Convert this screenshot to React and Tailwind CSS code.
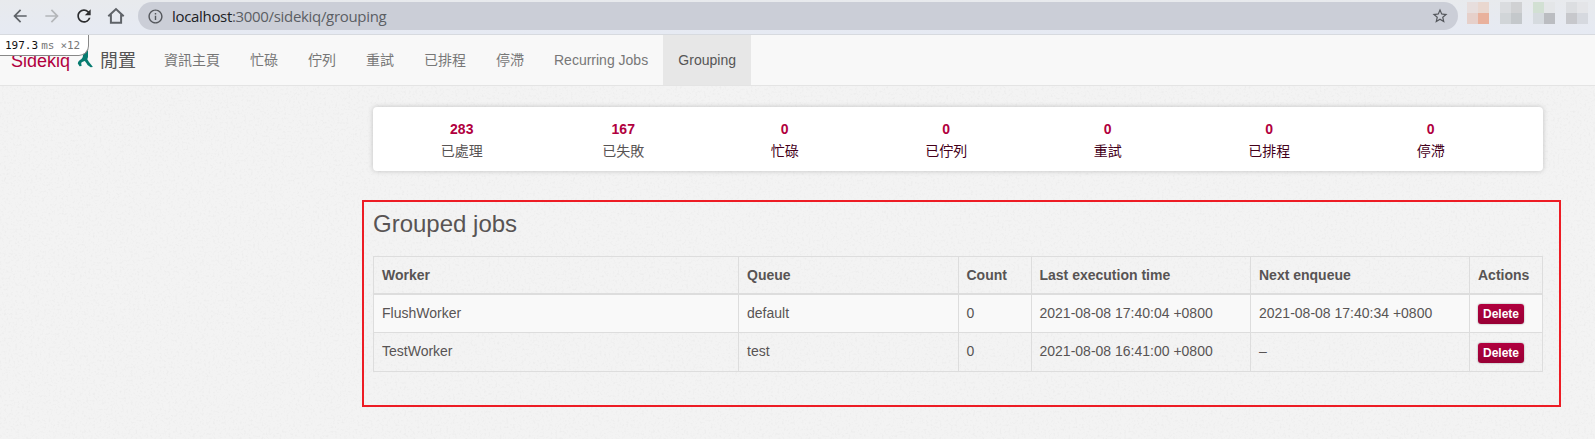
import React from "react";
import { MdArrowBack, MdArrowForward, MdRefresh, MdInfoOutline, MdStarBorder } from "react-icons/md";

const stats = [
  ["283", "已處理", false],
  ["167", "已失敗", false],
  ["0", "忙碌", true],
  ["0", "已佇列", true],
  ["0", "重試", true],
  ["0", "已排程", true],
  ["0", "停滯", true],
];

const rows = [
  ["FlushWorker", "default", "0", "2021-08-08 17:40:04 +0800", "2021-08-08 17:40:34 +0800"],
  ["TestWorker", "test", "0", "2021-08-08 16:41:00 +0800", "–"],
];

function Toolbar() {
  return (
    <header className="flex h-[35px] items-start border-b border-[#d7dadf] bg-gradient-to-b from-[#e8eaed] to-[#e6eaf3] font-['Open_Sans','Noto_Sans_CJK_TC',sans-serif]">
      <div className="flex h-8 w-[138px] shrink-0 items-center pl-[10px] text-[#5f6368]">
        <MdArrowBack className="size-5" />
        <MdArrowForward className="ml-3 size-5 text-[#b4b6b9]" />
        <MdRefresh className="ml-3 size-5 text-[#2c2d2f]" />
        <svg className="ml-3 size-5" viewBox="0 0 20 20" fill="none" stroke="currentColor" strokeWidth="2">
          <path d="M2.3 10.2 10 3l7.700 7.200M4.900 8.500v8.300h10.200V8.500" />
        </svg>
      </div>
      <div className="mt-[2px] flex h-7 w-[1320px] shrink-0 items-center rounded-full bg-[#cbced7] pl-[9px] pr-[9px]">
        <MdInfoOutline className="size-[17px] text-[#54575c]" />
        <span className="ml-2 whitespace-nowrap text-[15px] leading-7 tracking-[-0.320px] text-[#5b5e64]">
          <span className="text-[#202124]">localhost</span>:3000/sidekiq/grouping
        </span>
        <MdStarBorder className="ml-auto size-[18px] text-[#54575c]" />
      </div>
      <div className="ml-[9px] mt-[2px] flex gap-[11px]">
        <Mosaic a="bg-[#e7dedd]" b="bg-[#e9d7cf]" c="bg-[#e6d0ca]" d="bg-[#e9b19c]" />
        <Mosaic a="bg-[#dadcdf]" b="bg-[#d0d1d3]" c="bg-[#d1d5d8]" d="bg-[#c4c8cb]" />
        <Mosaic a="bg-[#d2e0d3]" b="bg-[#e4e6e8]" c="bg-[#d6dbdf]" d="bg-[#bbbdc1]" />
        <Mosaic a="bg-[#dcdee1]" b="bg-[#e4e5e8]" c="bg-[#c7c8cc]" d="bg-[#d6d9df]" />
      </div>
    </header>
  );
}

function Mosaic({ a, b, c, d }) {
  return (
    <div className="grid size-[22px] grid-cols-2 grid-rows-2">
      <i className={a} />
      <i className={b} />
      <i className={c} />
      <i className={d} />
    </div>
  );
}

function Nav() {
  const links = ["資訊主頁", "忙碌", "佇列", "重試", "已排程", "停滯", "Recurring Jobs"];
  return (
    <nav className="relative flex h-[51px] border-b border-[#e4e4e4] bg-[#f8f8f8] text-[14px] leading-[50px] text-[#777]">
      <div className="flex w-[149px] shrink-0 whitespace-nowrap pl-[11px] text-[18px] leading-[52px] text-[#555]">
        <span className="w-[59px] text-[#b1003e]">Sidekiq</span>
        <svg className="ml-[7px] mt-[14px] h-[20px] w-[17px] text-[#077b70]" viewBox="0 0 17 20" fill="currentColor">
          <path d="M6 1h5v7l-.7 2.300c.7 1.600 2.400 3.700 5.600 7.700l-2.200.3-3.200-2.200C9.800 14.500 9 13.200 7.800 12 5.800 12.500 4.300 13.200 4.200 14.300l.4 2.700-2.100.3L.8 14.400C1 12.600 2.500 11.400 4.200 10.300 5.700 9.200 6 7.500 6 6Z" />
        </svg>
        <span className="ml-[6px]">閒置</span>
      </div>
      {links.map((l) => (
        <a key={l} className="whitespace-nowrap px-[15px]">{l}</a>
      ))}
      <a className="h-[50px] w-[88px] bg-[#e7e7e7] text-center text-[#555]">Grouping</a>
      <div className="absolute left-0 top-0 flex h-[21px] w-[89px] rounded-br-[10px] border-b border-r border-[#888] bg-white pl-[5px] font-['DejaVu_Sans_Mono',monospace] text-[11px] leading-[21px] text-[#777]">
        <span className="text-[#111]">197.3</span>
        <span className="ml-[3px]">ms</span>
        <span className="ml-[6px]">×12</span>
      </div>
    </nav>
  );
}

function Summary() {
  return (
    <ul className="ml-[373px] mt-[21px] flex h-16 w-[1170px] rounded-[4px] bg-white pl-2 pt-[11px] text-center text-[14px] shadow-[0_0_5px_rgba(50,50,50,0.25)]">
      {stats.map(([n, label, link]) => (
        <li key={label} className="w-[161.500px]">
          <span className="block font-bold leading-[22px] text-[#b1003e]">{n}</span>
          <span className={link ? "block leading-[22px] text-[#44001a]" : "block leading-[22px] text-[#585454]"}>{label}</span>
        </li>
      ))}
    </ul>
  );
}

function Jobs() {
  return (
    <section className="ml-[362px] mt-[29px] h-[207px] w-[1199px] border-2 border-[#ed1c24] pl-[9px] pt-[8px]">
      <h3 className="text-[24px] leading-[27px]">Grouped jobs</h3>
      <table className="mt-[19px] w-[1170px] table-fixed border-separate border-spacing-0 border-l border-t border-[#ddd] text-left text-[14px] leading-5">
        <colgroup>
          <col className="w-[365px]" />
          <col className="w-[220px]" />
          <col className="w-[73px]" />
          <col className="w-[219px]" />
          <col className="w-[219px]" />
          <col className="w-[73px]" />
        </colgroup>
        <thead>
          <tr className="h-[38px]">
            {["Worker", "Queue", "Count", "Last execution time", "Next enqueue", "Actions"].map((h, i) => (
              <th key={h} className={`whitespace-nowrap border-b-2 border-r border-[#ddd] py-0 pr-0 font-bold ${i === 2 || i === 3 ? "pl-[7.5px]" : "pl-2"}`}>{h}</th>
            ))}
          </tr>
        </thead>
        <tbody>
          {rows.map((r, i) => (
            <tr key={r[0]} className={i === 0 ? "h-[38px] bg-[#f9f9f9]" : "h-[39px]"}>
              {r.map((c, j) => (
                <td key={j} className={`whitespace-nowrap border-b border-r border-[#ddd] pb-0 pr-0 pt-[8px] align-top ${j === 2 || j === 3 ? "pl-[7.5px]" : "pl-2"}`}>{c}</td>
              ))}
              <td className={i === 0 ? "border-b border-r border-[#ddd] pb-0 pl-2 pt-[9px] align-top" : "border-b border-r border-[#ddd] pb-0 pl-2 pt-[10px] align-top"}>
                <button className="block h-5 w-[46px] rounded-[3px] bg-gradient-to-b from-[#b1003e] to-[#980035] text-center text-[12px] font-bold leading-5 text-white shadow-[0_0_2px_rgba(0,0,0,0.4)]">Delete</button>
              </td>
            </tr>
          ))}
        </tbody>
      </table>
    </section>
  );
}

function PaperTexture() {
  return (
    <svg className="absolute inset-0 -z-10 h-full w-full" aria-hidden="true">
      <filter id="paper" x="0" y="0" width="100%" height="100%">
        <feTurbulence type="fractalNoise" baseFrequency="0.45" numOctaves="2" seed="4" />
        <feColorMatrix values="0 0 0 0 0.4  0 0 0 0 0.4  0 0 0 0 0.4  0.25 0 0 0 -0.125" />
      </filter>
      <rect width="100%" height="100%" filter="url(#paper)" />
    </svg>
  );
}

export default function App() {
  return (
    <div className="relative isolate h-[439px] w-[1595px] overflow-hidden bg-[#f3f3f3] font-['Liberation_Sans','Noto_Sans_CJK_TC',sans-serif] text-[#585454]">
      <PaperTexture />
      <Toolbar />
      <Nav />
      <Summary />
      <Jobs />
    </div>
  );
}
